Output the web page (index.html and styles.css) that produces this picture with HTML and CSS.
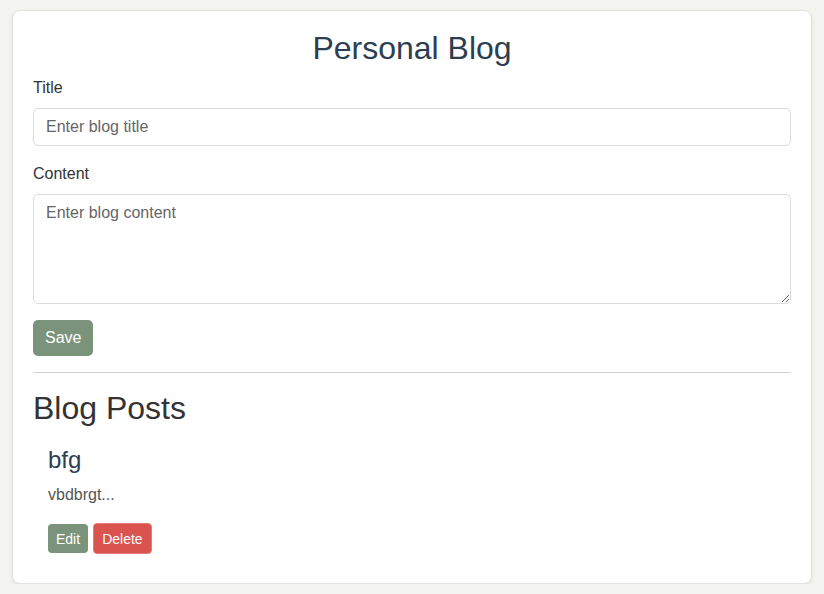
FILE: index.html
```html
<!DOCTYPE html>
<html lang="en">
<head>
<meta charset="UTF-8">
<title>Personal Blog</title>
<link rel="stylesheet" href="styles.css">
</head>
<body>
<div class="container">
  <h1 class="title">Personal Blog</h1>
  <form class="editor">
    <label class="field-label" for="title">Title</label>
    <input class="field-input" id="title" type="text" placeholder="Enter blog title">
    <label class="field-label" for="content">Content</label>
    <textarea class="field-area" id="content" placeholder="Enter blog content"></textarea>
    <div class="actions">
      <button type="button" class="btn btn-save">Save</button>
    </div>
  </form>
  <hr class="divider">
  <h2 class="posts-heading">Blog Posts</h2>
  <div class="post">
    <h3 class="post-title">bfg</h3>
    <p class="post-excerpt">vbdbrgt...</p>
    <div class="post-actions">
      <button type="button" class="btn btn-small btn-edit">Edit</button>
      <button type="button" class="btn btn-small btn-delete">Delete</button>
    </div>
  </div>
</div>
</body>
</html>
```
FILE: styles.css
```css
* { box-sizing: border-box; }

body {
  margin: 0;
  background: #f4f4f0;
  font-family: "Liberation Sans", Arial, sans-serif;
  color: #333;
}

.container {
  max-width: 800px;
  margin: 10px auto 0;
  background: #fff;
  border: 1px solid #e2e2de;
  border-radius: 8px;
  box-shadow: 0 2px 5px rgba(0, 0, 0, 0.08);
  padding: 19px 20px 21px;
}

.title {
  margin: 0 0 10px;
  font-size: 32px;
  font-weight: normal;
  text-align: center;
  color: #2c3e50;
  line-height: 37px;
}

.editor { margin: 0; }

.field-label {
  display: block;
  font-size: 16px;
  line-height: 18px;
  padding-top: 2px;
  margin-bottom: 11px;
  color: #333;
}

.field-input,
.field-area {
  display: block;
  width: 100%;
  font-family: "Liberation Sans", Arial, sans-serif;
  font-size: 16px;
  color: #333;
  border: 1px solid #dcdcdc;
  border-radius: 5px;
  background: #fff;
}

.field-input {
  height: 38px;
  padding: 0 12px;
  margin-bottom: 17px;
}

.field-area {
  height: 110px;
  padding: 9px 12px 7px;
  margin-bottom: 16px;
  resize: vertical;
}

.field-input::placeholder,
.field-area::placeholder {
  color: #666;
  opacity: 1;
}

.actions { display: flex; }

.btn {
  font-family: "Liberation Sans", Arial, sans-serif;
  color: #fff;
  border: none;
  cursor: pointer;
}

.btn-save {
  height: 36px;
  padding: 0 12px;
  font-size: 16px;
  border-radius: 5px;
  background: #7b937a;
}

.divider {
  margin: 16px 0 17px;
  border: none;
  border-top: 1px solid #cfcfcf;
  height: 0;
}

.posts-heading {
  margin: 0 0 4px;
  font-size: 32px;
  font-weight: normal;
  line-height: 37px;
  color: #333;
}

.post {
  padding: 15px 15px 8px;
}

.post-title {
  margin: 0;
  font-size: 24px;
  font-weight: normal;
  line-height: 28px;
  color: #2c3e50;
}

.post-excerpt {
  margin: 12px 0 19px;
  font-size: 16px;
  line-height: 18px;
  color: #555;
}

.post-actions {
  display: flex;
  align-items: center;
  gap: 5px;
}

.btn-small {
  font-size: 14px;
  border-radius: 4px;
  padding: 0 8px;
}

.btn-edit {
  height: 29px;
  background: #7b937a;
}

.btn-delete {
  height: 31px;
  background: #d9534f;
  border: 1px solid #e57c78;
}
```
